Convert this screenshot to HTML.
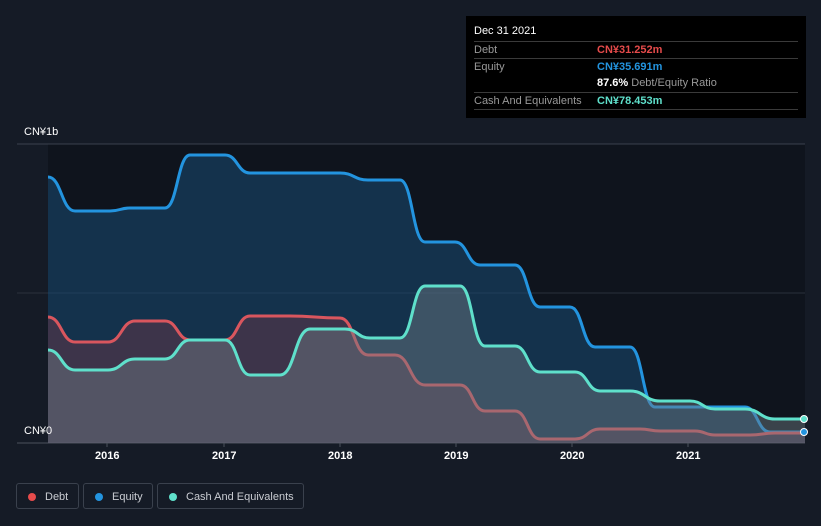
<!DOCTYPE html>
<html><head><meta charset="utf-8"><style>
body{margin:0;background:#151b26;width:821px;height:526px;overflow:hidden;font-family:"Liberation Sans","Noto Sans CJK SC",sans-serif;position:relative}
.tip{position:absolute;left:466px;top:16px;width:340px;height:102px;background:#000;color:#fff;font-size:11px}
.tip .r{position:absolute;left:8px;right:8px;border-top:1px solid #3a3a3a;height:17px;line-height:17px;color:#999}
.tip .v{position:absolute;left:123px;font-weight:bold}
.leg{position:absolute;top:483px;height:26px;border:1px solid #3a414d;border-radius:3px;color:#c9ccd2;font-size:11px;line-height:26px;box-sizing:border-box}
.leg i{position:absolute;left:11px;top:9px;width:8px;height:8px;border-radius:50%}
.leg span{position:absolute;left:28px}
.ax{position:absolute;color:#fff;font-size:11px}
</style></head><body>
<svg id="s" width="821" height="526" style="position:absolute;left:0;top:0">
<rect x="48" y="144" width="757" height="299" fill="#0f141d"/>
<line x1="17" y1="144" x2="805" y2="144" stroke="#3a414d"/>
<line x1="17" y1="293" x2="805" y2="293" stroke="#2a313c"/>
<line x1="17" y1="443" x2="805" y2="443" stroke="#4a515c"/>
<g stroke="#4a515c"><line x1="107" y1="443" x2="107" y2="447"/><line x1="224" y1="443" x2="224" y2="447"/><line x1="340" y1="443" x2="340" y2="447"/><line x1="456" y1="443" x2="456" y2="447"/><line x1="572" y1="443" x2="572" y2="447"/><line x1="688" y1="443" x2="688" y2="447"/></g>
</svg>
<div class="ax" style="left:24px;top:126px">CN¥1b</div>
<div class="ax" style="left:24px;top:425px">CN¥0</div>
<div class="ax" style="left:95px;top:450px;font-weight:bold">2016</div>
<div class="ax" style="left:212px;top:450px;font-weight:bold">2017</div>
<div class="ax" style="left:328px;top:450px;font-weight:bold">2018</div>
<div class="ax" style="left:444px;top:450px;font-weight:bold">2019</div>
<div class="ax" style="left:560px;top:450px;font-weight:bold">2020</div>
<div class="ax" style="left:676px;top:450px;font-weight:bold">2021</div>
<div class="tip">
<div style="position:absolute;left:8px;top:9px">Dec 31 2021</div>
<div class="r" style="top:25px">Debt<span class="v" style="color:#e64b4b">CN¥31.252m</span></div>
<div class="r" style="top:42px">Equity<span class="v" style="color:#2394df">CN¥35.691m</span></div>
<div class="r" style="top:59px;border-top:none"><span class="v" style="color:#fff">87.6% <b style="color:#999;font-weight:normal">Debt/Equity Ratio</b></span></div>
<div class="r" style="top:76px">Cash And Equivalents<span class="v" style="color:#5fe0cb">CN¥78.453m</span></div>
<div class="r" style="top:93px;height:0"></div>
</div>
<div class="leg" style="left:16px;width:63px"><i style="background:#e64b4b"></i><span>Debt</span></div>
<div class="leg" style="left:83px;width:70px"><i style="background:#2394df"></i><span>Equity</span></div>
<div class="leg" style="left:157px;width:147px"><i style="background:#5fe0cb"></i><span>Cash And Equivalents</span></div>
<script>
var E=[[48,177],[75,211],[110,211],[130,208],[165,208],[190,155],[225,155],[250,173],[340,173],[368,180],[400,180],[425,242],[455,242],[480,265],[515,265],[540,307],[570,307],[595,347],[630,347],[655,407],[720,407],[745,407],[770,432],[805,432]];
var D=[[48,317],[75,342],[108,342],[135,321],[165,321],[190,340],[225,340],[250,316],[290,316],[340,318],[368,355],[395,355],[425,385],[460,385],[485,411],[515,411],[540,439],[575,439],[600,429],[640,429],[660,431],[695,431],[715,435],[750,435],[775,433],[805,433]];
var C=[[48,350],[75,370],[108,370],[135,359],[165,359],[190,340],[225,340],[250,375],[280,375],[310,329],[345,329],[370,338],[400,338],[425,286],[460,286],[485,346],[515,346],[540,372],[575,372],[600,391],[630,391],[660,401],[690,401],[715,409],[745,409],[775,419],[805,419]];
function p(a){var s="M"+a[0][0]+","+a[0][1];for(var i=1;i<a.length;i++){var m=(a[i-1][0]+a[i][0])/2;s+=" C"+m+","+a[i-1][1]+" "+m+","+a[i][1]+" "+a[i][0]+","+a[i][1];}return s;}
function add(a,fill,op,st){var s=document.getElementById("s"),ns="http://www.w3.org/2000/svg";
var f=document.createElementNS(ns,"path");f.setAttribute("d",p(a)+" L805,443 L48,443 Z");f.setAttribute("fill",fill);f.setAttribute("fill-opacity",op);s.appendChild(f);
var l=document.createElementNS(ns,"path");l.setAttribute("d",p(a));l.setAttribute("fill","none");l.setAttribute("stroke",st);l.setAttribute("stroke-width","3");s.appendChild(l);}
add(E,"#1a4a72",0.55,"#2394df");add(D,"#8a3848",0.35,"#d9565e");add(C,"#6f7c86",0.45,"#5fe0cb");
var s=document.getElementById("s"),ns="http://www.w3.org/2000/svg";
[[419,"#5fe0cb"],[432,"#2394df"]].forEach(function(q){var c=document.createElementNS(ns,"circle");c.setAttribute("cx",804);c.setAttribute("cy",q[0]);c.setAttribute("r",3.5);c.setAttribute("fill",q[1]);c.setAttribute("stroke","#fff");s.appendChild(c);});
</script>
</body></html>
